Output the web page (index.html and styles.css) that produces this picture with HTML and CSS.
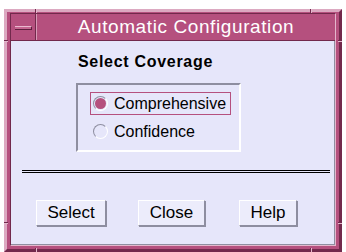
FILE: index.html
```html
<!DOCTYPE html>
<html>
<head>
<meta charset="utf-8">
<link rel="stylesheet" href="styles.css">
</head>
<body>
<div class="window">
  <span class="tick tick-t1"></span>
  <span class="tick tick-t2"></span>
  <span class="tick tick-b1"></span>
  <span class="tick tick-b2"></span>
  <span class="tick tick-l1"></span>
  <span class="tick tick-l2"></span>
  <span class="tick tick-r1"></span>
  <span class="tick tick-r2"></span>
  <div class="panel">
    <div class="titlebar">
      <div class="menubtn"><span class="dash"></span></div>
      <div class="title">Automatic Configuration</div>
    </div>
    <div class="content">
      <div class="heading">Select Coverage</div>
      <div class="group">
        <div class="radio selected"><span class="circle"><span class="dot"></span></span><span class="label">Comprehensive</span></div>
        <div class="radio"><span class="circle"></span><span class="label">Confidence</span></div>
      </div>
      <div class="sep"></div>
      <div class="buttons">
        <div class="btn btn-select">Select</div>
        <div class="btn btn-close">Close</div>
        <div class="btn btn-help">Help</div>
      </div>
    </div>
  </div>
</div>
</body>
</html>
```

FILE: styles.css
```css
html, body {
  margin: 0;
  padding: 0;
  background: #ffffff;
}
body {
  font-family: "Liberation Sans", Arial, sans-serif;
}
.window {
  position: relative;
  box-sizing: border-box;
  margin: 9px 0 0 4px;
  width: 338px;
  height: 243px;
  background: #b5507e;
  border: 3px solid;
  border-color: #dca9c1 #72294c #72294c #dca9c1;
  padding: 1px 3px 3px 3px;
}
.tick {
  position: absolute;
  display: block;
}
.tick-t1, .tick-t2, .tick-b1, .tick-b2 {
  width: 1px;
  height: 4px;
  background: #72294c;
  box-shadow: 1px 0 0 #e4b7cc;
}
.tick-t1 { left: 28px; top: -3px; }
.tick-t2 { left: 303px; top: -3px; }
.tick-b1 { left: 28px; bottom: -3px; }
.tick-b2 { left: 303px; bottom: -3px; }
.tick-l1, .tick-l2, .tick-r1, .tick-r2 {
  width: 4px;
  height: 1px;
  background: #72294c;
  box-shadow: 0 1px 0 #e4b7cc;
}
.tick-l1 { left: -3px; top: 28px; }
.tick-l2 { left: -3px; top: 210px; }
.tick-r1 { right: -3px; top: 28px; }
.tick-r2 { right: -3px; top: 210px; }

.panel {
  box-sizing: border-box;
  height: 100%;
  display: flex;
  flex-direction: column;
  border: 1px solid;
  border-color: #72294c #e4b7cc #e4b7cc #72294c;
}
.titlebar {
  display: flex;
  height: 26px;
  border-bottom: 1px solid #72294c;
  background: #b5507e;
}
.menubtn {
  width: 24px;
  border-right: 1px solid #72294c;
  box-shadow: 1px 0 0 #d99bb7;
  display: flex;
  align-items: center;
  justify-content: center;
}
.dash {
  display: block;
  box-sizing: border-box;
  width: 17px;
  height: 4px;
  margin-top: 1px;
  background: #c56590;
  border-top: 1px solid #eab9cf;
  border-bottom: 1px solid #5e1f3d;
  border-right: 1px solid #5e1f3d;
}
.title {
  flex: 1;
  text-align: center;
  color: #ffffff;
  font-size: 19px;
  line-height: 26px;
  letter-spacing: 0.6px;
  padding-left: 1px;
}
.content {
  flex: 1;
  background: #e6e6fa;
  border-right: 1px solid #8e8ea0;
  border-bottom: 1px solid #8e8ea0;
  display: flex;
  flex-direction: column;
}
.heading {
  margin: 12px 0 0 67px;
  font-weight: bold;
  font-size: 16px;
  line-height: 18px;
  color: #000;
  letter-spacing: 0.7px;
}
.group {
  box-sizing: border-box;
  margin: 12px 0 0 65px;
  width: 165px;
  height: 69px;
  border: 2px solid;
  border-color: #8e8ea0 #ffffff #ffffff #8e8ea0;
  padding: 7px 0 0 12px;
  display: flex;
  flex-direction: column;
  gap: 5px;
}
.radio {
  box-sizing: border-box;
  width: 141px;
  height: 23px;
  border: 1px solid transparent;
  display: flex;
  align-items: center;
  padding-left: 2px;
}
.radio.selected {
  border-color: #b5507e;
}
.circle {
  box-sizing: border-box;
  width: 15px;
  height: 15px;
  border-radius: 50%;
  border: 1px solid;
  border-color: #8e8ea0 #ffffff #ffffff #8e8ea0;
  display: flex;
  align-items: center;
  justify-content: center;
  flex: none;
}
.dot {
  width: 11px;
  height: 11px;
  border-radius: 50%;
  background: #b5507e;
}
.label {
  margin-left: 6px;
  font-size: 16px;
  color: #000;
  line-height: 18px;
}
.sep {
  margin: 18px 4px 0 11px;
  height: 1px;
  border-top: 1px solid #000;
  border-bottom: 1px solid #000;
}
.buttons {
  display: flex;
  margin: 27px 0 0 25px;
}
.btn {
  box-sizing: border-box;
  height: 26px;
  background: #ececfb;
  border: 1px solid;
  border-color: #ffffff #8e8ea0 #8e8ea0 #ffffff;
  box-shadow: 1px 1px 0 #8e8ea0;
  font-size: 17px;
  line-height: 24px;
  text-align: center;
  color: #000;
}
.btn-select { width: 70px; }
.btn-close { width: 67px; margin-left: 32px; }
.btn-help { width: 58px; margin-left: 34px; }
```
